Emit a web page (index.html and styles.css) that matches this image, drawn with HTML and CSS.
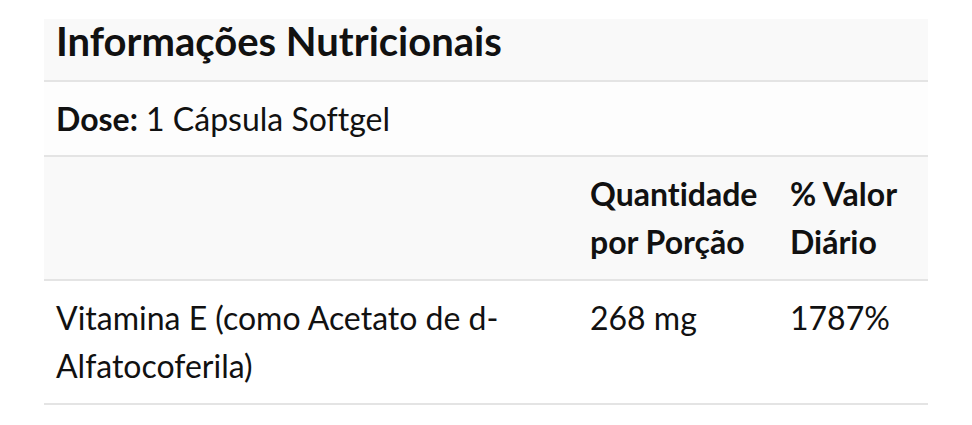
FILE: index.html
```html
<!DOCTYPE html>
<html lang="pt-br">
<head>
    <meta charset="UTF-8">
    <meta name="viewport" content="width=device-width, initial-scale=1.0">
    <title>Informações Nutricionais</title>
    <link rel="stylesheet" href="styles.css">
</head>
<body>
<div id="nutricional">
    <h2 class="titulo">Informações Nutricionais</h2>

    <p class="dose"><strong>Dose:</strong> 1 Cápsula Softgel</p>

    <table class="tabela">
        <thead>
            <tr>
                <th class="col-nome"></th>
                <th class="col-qtd">Quantidade por Porção</th>
                <th class="col-vd">% Valor Diário</th>
            </tr>
        </thead>
        <tbody>
            <tr>
                <td>Vitamina E (como Acetato de d-Alfatocoferila)</td>
                <td>268 mg</td>
                <td>1787%</td>
            </tr>
        </tbody>
    </table>
</div>
</body>
</html>
```

FILE: styles.css
```css
body {
    margin: 0;
    background-color: #ffffff;
    font-family: "Lato", "Liberation Sans", sans-serif;
    font-variant-ligatures: no-common-ligatures;
    color: #111111;
}

/* Caixa principal */
#nutricional {
    margin: 19px 44px 0 44px;
}

.titulo {
    margin: 0;
    padding: 0 12px;
    height: 61px;
    line-height: 44px;
    font-size: 40px;
    font-weight: 700;
    background-color: #f9f9f9;
    border-bottom: 2px solid #e4e4e4;
}

.dose {
    margin: 0;
    padding: 13px 12px 12px 12px;
    font-size: 32px;
    line-height: 48px;
    background-color: #fdfdfd;
    border-bottom: 2px solid #e4e4e4;
}

.dose strong {
    font-weight: 700;
}

.tabela {
    width: 100%;
    border-collapse: collapse;
    font-size: 32px;
    line-height: 48px;
}

.tabela th,
.tabela td {
    padding: 13px 12px;
    text-align: left;
    vertical-align: top;
    border-bottom: 2px solid #e4e4e4;
}

.tabela thead tr {
    background-color: #f9f9f9;
}

.tabela th {
    font-weight: 700;
}

.col-qtd {
    width: 176px;
}

.col-vd {
    width: 126px;
}
```
